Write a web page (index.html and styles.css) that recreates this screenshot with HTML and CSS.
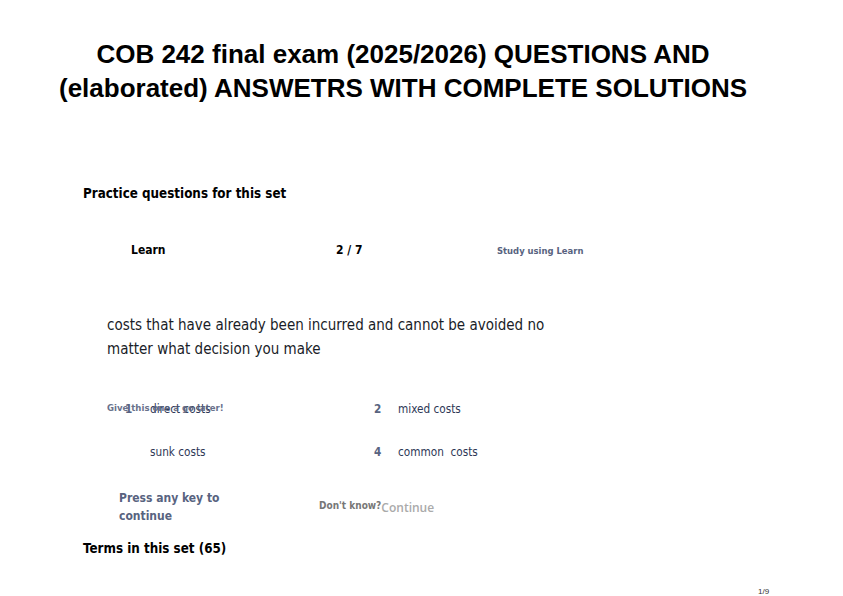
FILE: index.html
```html
<!DOCTYPE html>
<html>
<head>
<meta charset="utf-8">
<link rel="stylesheet" href="styles.css">
</head>
<body>
<div class="page">
  <h1 class="title">COB 242 final exam (2025/2026) QUESTIONS AND<br>(elaborated) ANSWETRS WITH COMPLETE SOLUTIONS</h1>
  <h2 class="section">Practice questions for this set</h2>
  <div class="learnbar">
    <span class="learn">Learn</span>
    <span class="count">2 / 7</span>
    <span class="study">Study using Learn</span>
  </div>
  <p class="question">costs that have already been incurred and cannot be avoided no matter what decision you make</p>
  <div class="options">
    <div class="opt">
      <span class="later">Give this one a go later!</span>
      <span class="num">1</span><span class="label">direct costs</span>
    </div>
    <div class="opt"><span class="num">2</span><span class="label">mixed costs</span></div>
    <div class="opt"><span class="num"></span><span class="label">sunk costs</span></div>
    <div class="opt"><span class="num">4</span><span class="label">common&nbsp; costs</span></div>
  </div>
  <div class="footerbar">
    <span class="press">Press any key to continue</span>
    <span class="dk">Don't know?</span><span class="cont">Continue</span>
  </div>
  <h2 class="section terms">Terms in this set (65)</h2>
  <div class="pagenum">1/9</div>
</div>
</body>
</html>
```
FILE: styles.css
```css
html, body { margin: 0; padding: 0; background: #fff; }
.page { width: 843px; height: 596px; position: relative; font-family: "DejaVu Sans Condensed", "DejaVu Sans", sans-serif; color: #1b1b1b; }
.title { margin: 0; padding-top: 37px; width: 806px; text-align: center; font-family: "Liberation Sans", Arial, sans-serif; font-weight: bold; font-size: 26px; line-height: 34px; color: #000; }
.section { margin: 0; font-size: 13.3px; font-weight: bold; color: #000; padding-left: 83px; }
.title + .section { margin-top: 81px; }
.learnbar { display: flex; align-items: center; height: 20px; margin-top: 39px; font-size: 12px; font-weight: bold; color: #000; }
.learn { margin-left: 131px; width: 205px; }
.count { width: 161px; }
.study { font-size: 9.4px; color: #586380; }
.question { margin: 53px 0 0 107px; width: 450px; font-size: 15px; line-height: 24px; color: #1a1d28; }
.options { display: grid; grid-template-columns: 267px 300px; row-gap: 26px; margin: 39px 0 0 107px; font-size: 11.7px; color: #2e3856; }
.opt { display: flex; align-items: center; height: 17px; position: relative; }
.num { width: 24px; font-weight: bold; color: #586380; }
.opt:nth-child(odd) .num { margin-left: 18px; width: 25px; }
.later { position: absolute; left: 0; top: 2px; font-size: 9.5px; font-weight: bold; color: #586380; opacity: 0.9; }
.label { color: #2e3856; }
.footerbar { display: flex; align-items: center; margin: 29px 0 0 119px; }
.press { width: 104px; font-size: 12px; font-weight: bold; line-height: 18px; color: #586380; margin-right: 96px; }
.dk { font-size: 10px; font-weight: bold; color: #777; margin-top: -3px; }
.cont { font-family: "Open Sans", sans-serif; font-size: 12px; font-weight: 600; color: #aaa; }
.terms { margin-top: 16px; }
.pagenum { position: absolute; left: 758px; top: 587px; font-family: "Liberation Sans", sans-serif; font-size: 8px; color: #333; }
```
